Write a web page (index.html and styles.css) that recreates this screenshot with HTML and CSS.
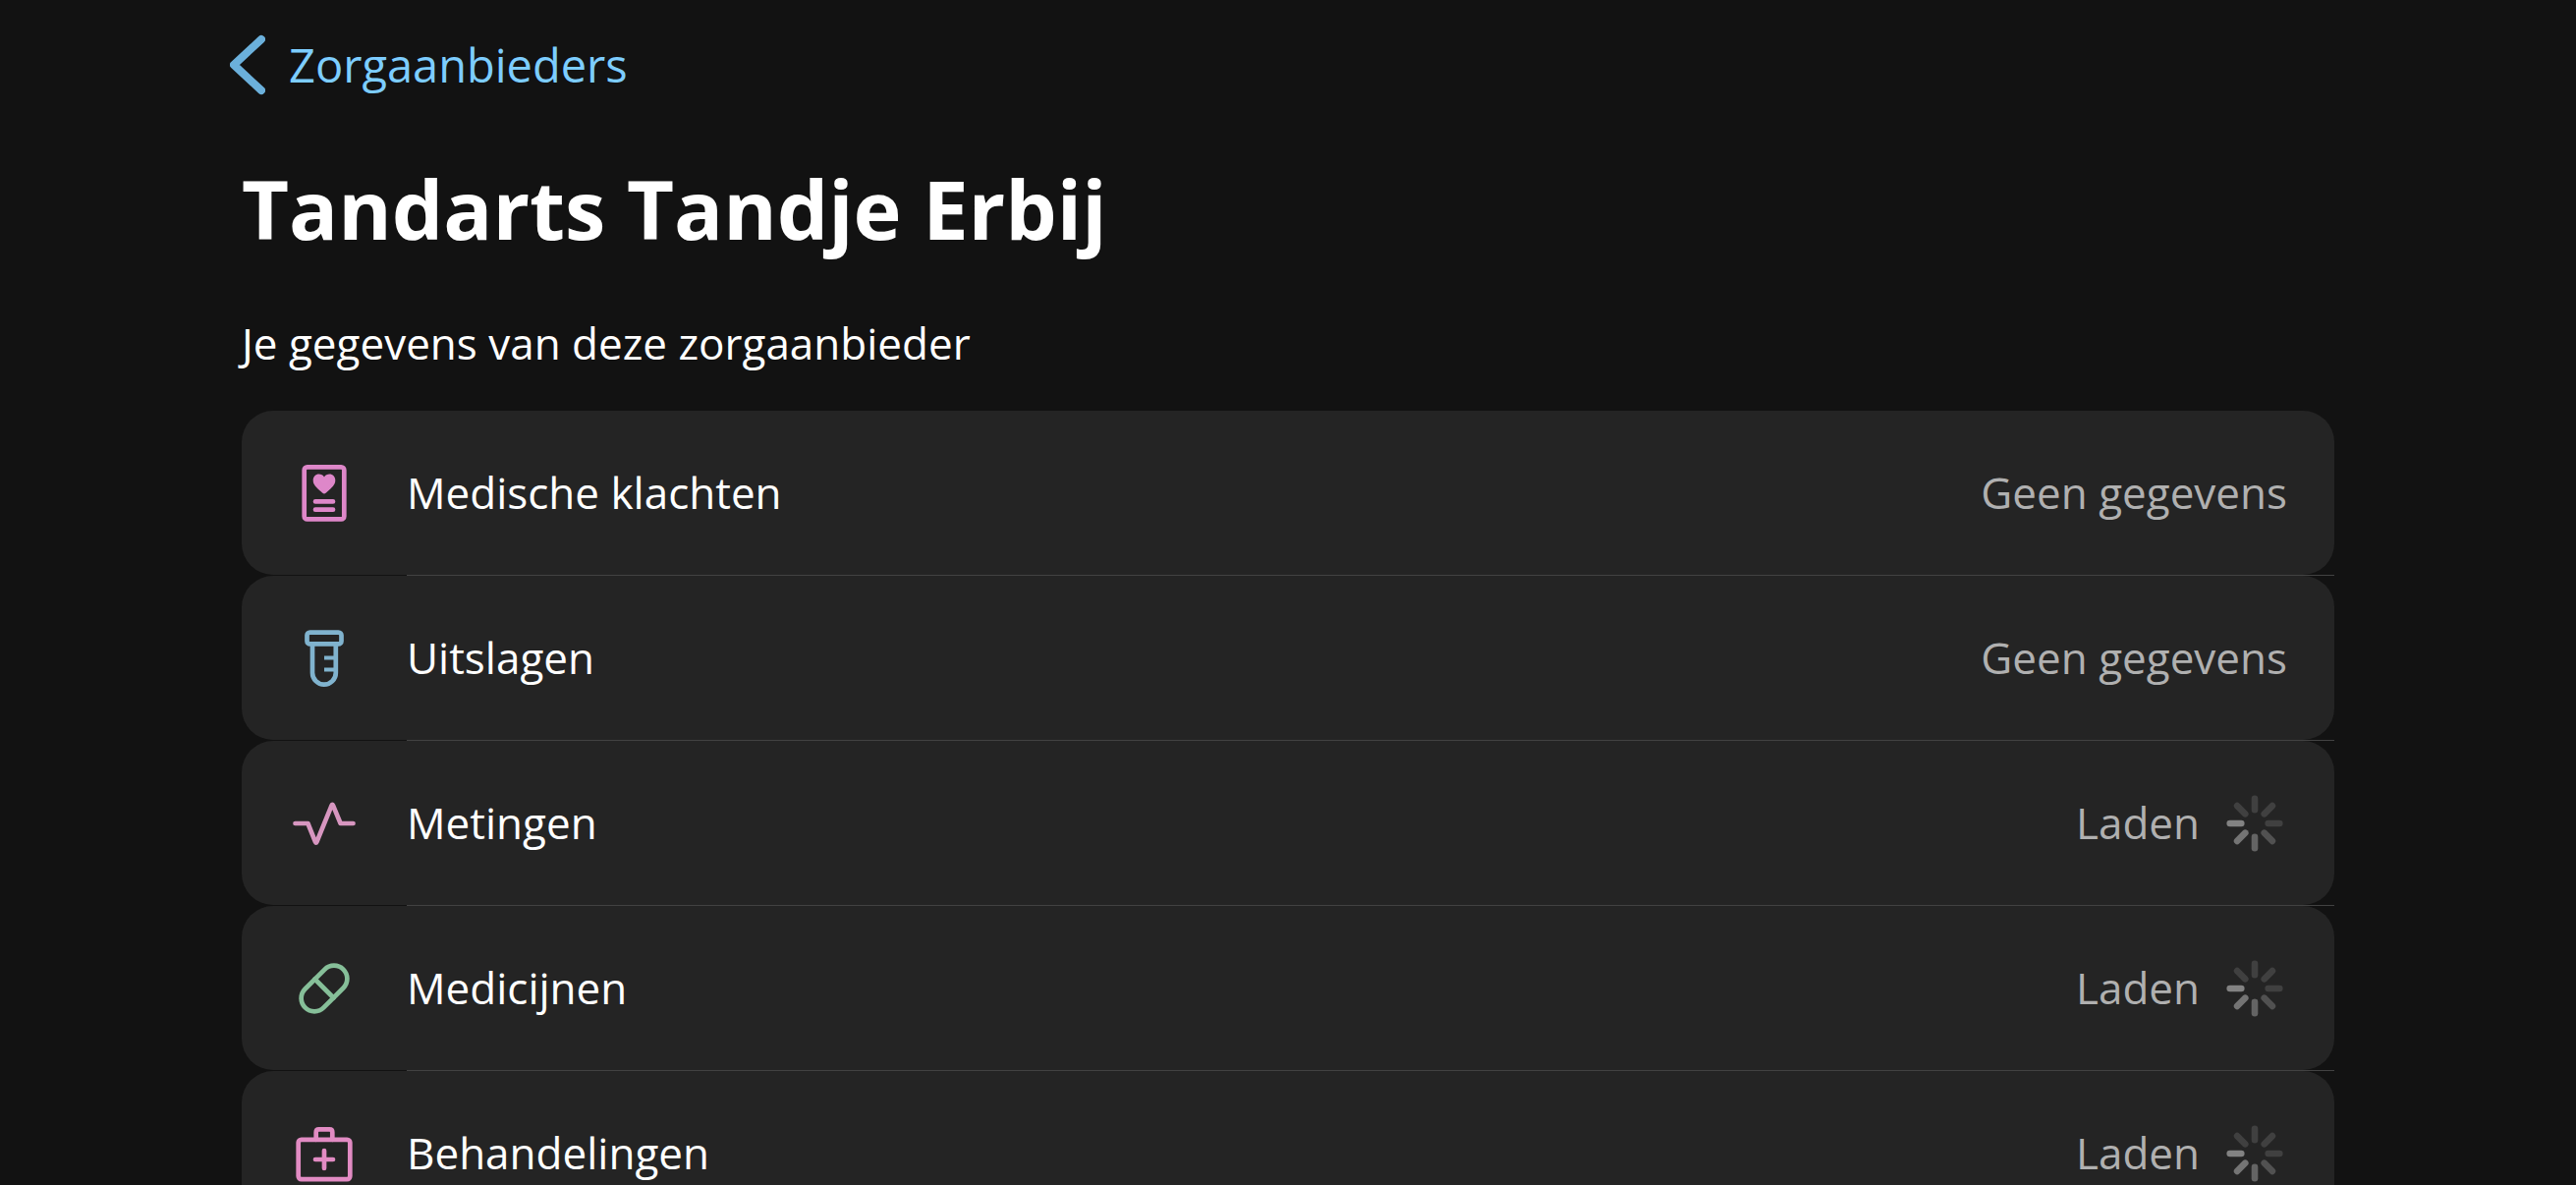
FILE: index.html
```html
<!DOCTYPE html>
<html lang="nl">
<head>
<meta charset="utf-8">
<meta name="viewport" content="width=device-width, initial-scale=1">
<title>Tandarts Tandje Erbij</title>
<link rel="stylesheet" href="styles.css">
</head>
<body>
<svg class="symbols" aria-hidden="true">
  <symbol id="spinner" viewBox="0 0 65 65">
    <g transform="translate(32 33)" stroke-width="6.6" stroke-linecap="round">
      <path d="M-13.7 0H-25.3" stroke="#828282"/>
      <path d="M-9.7 9.7L-17.9 17.9" stroke="#747474"/>
      <path d="M0 13.7V25.3" stroke="#646464"/>
      <path d="M9.7 9.7L17.9 17.9" stroke="#515151"/>
      <path d="M13.7 0H25.3M9.7 -9.7L17.9 -17.9M0 -13.7V-25.3M-9.7 -9.7L-17.9 -17.9" stroke="#404040"/>
    </g>
  </symbol>
</svg>
<div class="screen">
  <nav class="navbar">
    <a class="back" href="#zorgaanbieders">
      <svg class="chevron" viewBox="0 0 36 62" aria-hidden="true"><path d="M32 5L4 31L32 57"/></svg>
      <span>Zorgaanbieders</span>
    </a>
  </nav>
  <main class="content">
    <h1 class="title">Tandarts Tandje Erbij</h1>
    <h2 class="subtitle">Je gegevens van deze zorgaanbieder</h2>
    <ul class="list">
      <li class="item">
        <div class="row">
          <svg class="icon complaints" viewBox="0 0 71 71" aria-hidden="true">
            <rect x="15.7" y="9.4" width="40.6" height="53" rx="3"/>
            <path class="solid" d="M36 36.4C34.8 36.4 34 35.4 33 34.5C28 30.2 24.7 27.4 24.7 22.8C24.7 19.2 27.3 16.6 30.6 16.6C32.8 16.6 34.8 17.6 36 19.4C37.2 17.6 39.2 16.6 41.4 16.6C44.7 16.6 47.3 19.2 47.3 22.8C47.3 27.4 44 30.2 39 34.5C38 35.4 37.2 36.4 36 36.4Z"/>
            <path d="M27 44.4H45M27 52.7H45"/>
          </svg>
          <span class="label">Medische klachten</span>
          <span class="status">Geen gegevens</span>
        </div>
      </li>
      <li class="item">
        <div class="row">
          <svg class="icon results" viewBox="0 0 71 71" aria-hidden="true">
            <rect x="18.5" y="9.6" width="35" height="11.8" rx="3"/>
            <path d="M24 21.4V50.8A11.9 11.9 0 0 0 47.8 50.8V21.4"/>
            <path class="mark" d="M36 35.6H47.8M36 47.4H47.8"/>
          </svg>
          <span class="label">Uitslagen</span>
          <span class="status">Geen gegevens</span>
        </div>
      </li>
      <li class="item">
        <div class="row">
          <svg class="icon measurements" viewBox="0 0 71 71" aria-hidden="true">
            <path d="M6.5 36H19.4L27 54.8Q27.7 56.4 28.4 54.8L43.6 17.6Q44.3 16 45 17.6L52.6 36H65.5"/>
          </svg>
          <span class="label">Metingen</span>
          <span class="status">Laden<svg class="spinner" aria-hidden="true"><use href="#spinner"/></svg></span>
        </div>
      </li>
      <li class="item">
        <div class="row">
          <svg class="icon medicines" viewBox="0 0 71 71" aria-hidden="true">
            <g transform="rotate(-45 36 36)">
              <rect x="8.5" y="22.6" width="55" height="26.8" rx="13.4"/>
              <path d="M36 22.6V49.4"/>
            </g>
          </svg>
          <span class="label">Medicijnen</span>
          <span class="status">Laden<svg class="spinner" aria-hidden="true"><use href="#spinner"/></svg></span>
        </div>
      </li>
      <li class="item">
        <div class="row">
          <svg class="icon treatments" viewBox="0 0 71 71" aria-hidden="true">
            <rect x="9.7" y="21.8" width="52.6" height="40.3" rx="3"/>
            <path d="M27.7 21.8V14.3Q27.7 11.4 30.6 11.4H41.4Q44.3 11.4 44.3 14.3V21.8M27 42H45M36 33V51"/>
          </svg>
          <span class="label">Behandelingen</span>
          <span class="status">Laden<svg class="spinner" aria-hidden="true"><use href="#spinner"/></svg></span>
        </div>
      </li>
    </ul>
  </main>
</div>
</body>
</html>
```
FILE: styles.css
```css
* {
  box-sizing: border-box;
}

body {
  margin: 0;
  background: #121212;
  color: #fff;
  font-family: "Open Sans", "Noto Sans", sans-serif;
  font-size: 44px;
  line-height: 60px;
}

.symbols {
  display: none;
}

/* The screen scrolls on its own, without a visible scrollbar */
.screen {
  height: 100vh;
  overflow-y: auto;
  scrollbar-width: none;
}

.navbar {
  display: flex;
  align-items: center;
  height: 132px;
  padding: 0 234px;
}

.back {
  display: flex;
  align-items: center;
  gap: 24px;
  color: #7dcdff;
  font-size: 47px;
  text-decoration: none;
}

.chevron {
  width: 36px;
  height: 62px;
  fill: none;
  stroke: #6bb0db;
  stroke-width: 8;
  stroke-linecap: round;
  stroke-linejoin: round;
}

.content {
  padding: 32px 246px 48px;
}

.title {
  margin: 0 0 59px;
  font-size: 83px;
  font-weight: 700;
  line-height: 96px;
}

.subtitle {
  margin: 0 0 39px;
  font-size: 44px;
  font-weight: 400;
}

.list {
  margin: 0;
  padding: 0;
  list-style: none;
}

/* Hairline between rows, starting at the label */
.item:not(:last-child)::after {
  content: "";
  display: block;
  height: 1px;
  margin-left: 168px;
  background: #424242;
}

.row {
  display: flex;
  align-items: center;
  gap: 49px;
  min-height: 167px;
  padding: 0 48px;
  border-radius: 32px;
  background: #242424;
}

.label {
  flex: 1;
  padding-bottom: 2px;
}

.status {
  display: flex;
  align-items: center;
  gap: 24px;
  padding-bottom: 2px;
  color: #b0b0b0;
}

.spinner {
  width: 65px;
  height: 67px;
  padding-top: 2px;
}

.icon {
  width: 71px;
  height: 71px;
  fill: none;
  stroke: currentColor;
  stroke-width: 4.7;
  stroke-linecap: round;
  stroke-linejoin: round;
}

.icon .solid {
  fill: currentColor;
  stroke: none;
}

.icon .mark {
  stroke-width: 4;
  stroke-linecap: butt;
}

.complaints {
  color: #de87c9;
}

.results {
  color: #80b3ce;
}

.measurements {
  color: #d796c0;
}

.medicines {
  color: #86bf99;
}

.treatments {
  color: #e28bc3;
}
```
